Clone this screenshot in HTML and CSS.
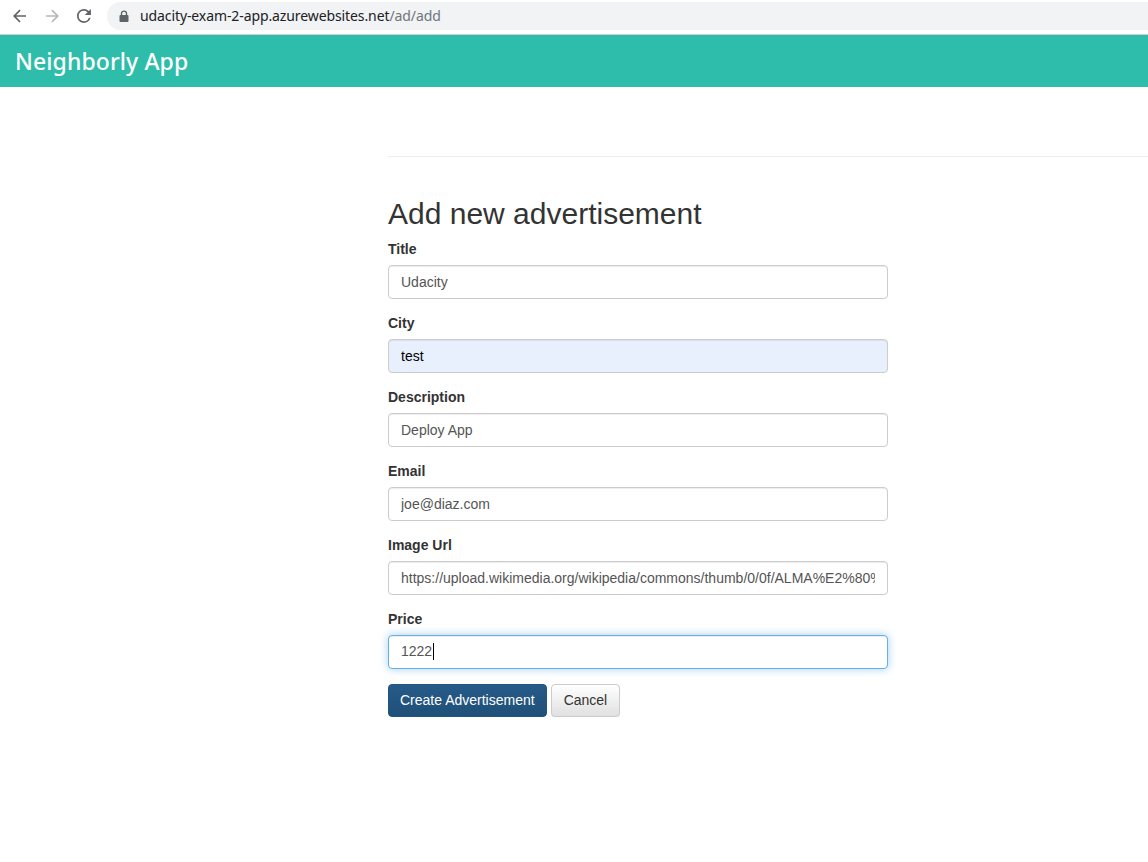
FILE: index.html
```html
<!DOCTYPE html>
<html lang="en">
<head>
<meta charset="utf-8">
<title>Neighborly App</title>
<link rel="stylesheet" href="styles.css">
</head>
<body>
<div class="chrome">
  <div class="nav-icons">
    <svg class="ico" width="16" height="16" viewBox="0 0 16 16"><path d="M14 7.2H4.1l4.5-4.5L7.5 1.5 1 8l6.5 6.5 1.1-1.1-4.5-4.6H14z" fill="#5f6368"/></svg>
    <svg class="ico" width="16" height="16" viewBox="0 0 16 16"><path d="M2 7.2h9.9L7.4 2.7l1.1-1.2L15 8l-6.5 6.5-1.1-1.1 4.5-4.6H2z" fill="#b5b7ba"/></svg>
    <svg class="ico" width="16" height="16" viewBox="0 0 16 16"><path d="M13.6 2.4A7.9 7.9 0 0 0 8 0a8 8 0 1 0 7.7 10h-2.1A6 6 0 1 1 8 2c1.7 0 3.1.7 4.2 1.8L9 7h7V0z" fill="#5f6368" transform="translate(1 1) scale(0.87)"/></svg>
  </div>
  <div class="omnibox">
    <svg class="lock" width="10" height="12" viewBox="0 0 10 12"><path d="M2.5 5V3.6a2.5 2.5 0 0 1 5 0V5" fill="none" stroke="#5f6368" stroke-width="1.4"/><rect x="0.5" y="5" width="9" height="7" rx="1" fill="#5f6368"/></svg>
    <span class="host">udacity-exam-2-app.azurewebsites.net</span><span class="path">/ad/add</span>
  </div>
</div>
<header class="navbar">
  <span class="brand">Neighborly App</span>
</header>
<main class="container">
  <hr class="rule">
  <h2 class="page-title">Add new advertisement</h2>
  <form class="ad-form">
    <div class="form-group">
      <label class="lbl">Title</label>
      <input class="form-control" type="text" value="Udacity">
    </div>
    <div class="form-group">
      <label class="lbl">City</label>
      <input class="form-control autofill" type="text" value="test">
    </div>
    <div class="form-group">
      <label class="lbl">Description</label>
      <input class="form-control" type="text" value="Deploy App">
    </div>
    <div class="form-group">
      <label class="lbl">Email</label>
      <input class="form-control" type="text" value="joe@diaz.com">
    </div>
    <div class="form-group">
      <label class="lbl">Image Url</label>
      <input class="form-control" type="text" value="https://upload.wikimedia.org/wikipedia/commons/thumb/0/0f/ALMA%E2%80%93Atacama.jpg">
    </div>
    <div class="form-group">
      <label class="lbl">Price</label>
      <div class="form-control focused"><span>1222</span><span class="caret"></span></div>
    </div>
    <div class="actions">
      <button type="button" class="btn btn-primary">Create Advertisement</button>
      <button type="button" class="btn btn-default">Cancel</button>
    </div>
  </form>
</main>
</body>
</html>
```
FILE: styles.css
```css
* { box-sizing: border-box; }
html, body { margin: 0; padding: 0; background: #fff; }
body {
  font-family: "Liberation Sans", Arial, sans-serif;
  font-size: 14px;
  line-height: 1.42857;
  color: #333;
}
.chrome {
  height: 35px;
  display: flex;
  align-items: center;
  background: #fff;
  border-bottom: 1px solid #d0d0d0;
  padding-bottom: 2px;
}
.nav-icons {
  display: flex;
  align-items: center;
  gap: 16px;
  padding-left: 12px;
  width: 107px;
}
.ico { display: block; }
.omnibox {
  flex: 1;
  height: 28px;
  background: #f1f3f4;
  border-radius: 14px 0 0 14px;
  display: flex;
  align-items: center;
  padding-left: 12px;
  font-family: "Noto Sans", "Open Sans", sans-serif;
  font-size: 14px;
  letter-spacing: -0.1px;
}
.lock { margin-right: 11px; }
.host { color: #202124; }
.path { color: #70757a; }
.navbar {
  height: 52px;
  background: #2ebdaa;
  display: flex;
  align-items: center;
  padding-left: 15px;
}
.brand {
  color: #fff;
  font-family: "Noto Sans", "Open Sans", sans-serif;
  font-size: 23px;
  font-weight: 500;
  letter-spacing: 0.1px;
}
.container {
  padding-left: 388px;
  padding-top: 69px;
}
.rule {
  margin: 0 0 40px 0;
  border: 0;
  border-top: 1px solid #eee;
}
.page-title {
  margin: 0 0 10px 0;
  font-size: 30px;
  font-weight: 500;
  line-height: 1.1;
  color: #333;
}
.ad-form { width: 500px; }
.form-group { margin-bottom: 15px; }
.lbl {
  display: block;
  font-weight: bold;
  margin-bottom: 5px;
  max-width: 100%;
}
.form-control {
  display: block;
  width: 100%;
  height: 34px;
  padding: 6px 12px;
  font-family: "Liberation Sans", Arial, sans-serif;
  font-size: 14px;
  line-height: 1.42857;
  color: #555;
  background: #fff;
  border: 1px solid #ccc;
  border-radius: 4px;
  box-shadow: inset 0 1px 1px rgba(0,0,0,.075);
  outline: none;
  white-space: nowrap;
  overflow: hidden;
}
.autofill { background: #e8f0fe; color: #000; }
.focused {
  border-color: #66afe9;
  box-shadow: inset 0 1px 1px rgba(0,0,0,.075), 0 0 8px rgba(102,175,233,.6);
  display: flex;
  align-items: center;
}
.caret {
  display: inline-block;
  width: 1px;
  height: 17px;
  background: #000;
  margin-left: 1px;
}
.actions {
  display: flex;
  gap: 4px;
  margin-top: 1px;
}
.btn {
  height: 33px;
  padding: 6px 11px;
  font-family: "Liberation Sans", Arial, sans-serif;
  font-size: 14px;
  line-height: 1.42857;
  border-radius: 4px;
  border: 1px solid transparent;
  cursor: pointer;
  white-space: nowrap;
}
.btn-primary {
  background: #245580;
  background-image: linear-gradient(#265a88, #1f5079);
  border-color: #245580;
  color: #fff;
}
.btn-default {
  padding: 6px 12px;
  background-image: linear-gradient(#fff, #e0e0e0);
  border-color: #ccc;
  color: #333;
  box-shadow: inset 0 1px 0 rgba(255,255,255,.15), 0 1px 1px rgba(0,0,0,.075);
}
```
